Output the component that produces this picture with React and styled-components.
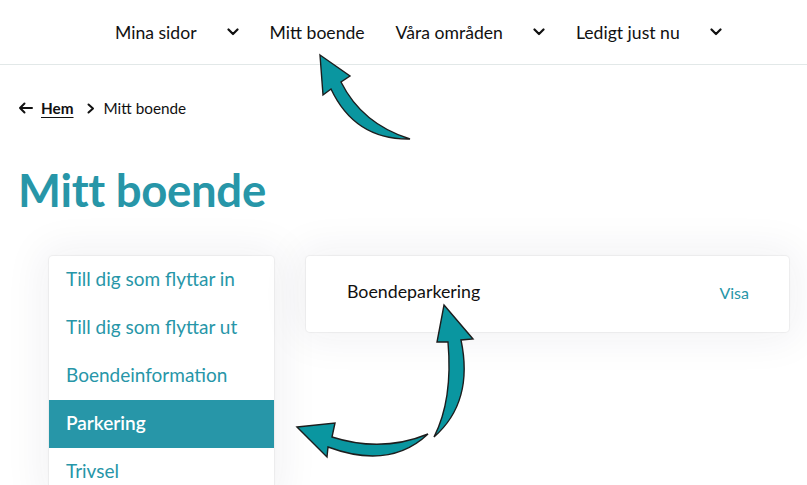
import React from "react";
import styled, { createGlobalStyle } from "styled-components";

const Global = createGlobalStyle`
  html, body { margin: 0; padding: 0; background: #fff; }
  body { font-family: Lato, "Open Sans", sans-serif; color: #111; overflow: hidden; }
  * { box-sizing: border-box; }
`;

const TEAL = "#2796a8";

const Page = styled.div`
  position: relative;
  width: 807px;
  height: 485px;
  overflow: hidden;
`;

const Header = styled.header`
  height: 65px;
  border-bottom: 1px solid #e2e8e8;
  display: flex;
  align-items: center;
  padding-left: 115px;
`;

const Nav = styled.nav`
  display: flex;
  align-items: center;
  gap: 31px;
`;

const NavItem = styled.div`
  display: flex;
  align-items: center;
  gap: 30px;
  font-size: 17.6px;
  color: #111;
`;

const Chevron = styled.svg`
  width: 12px;
  height: 8px;
  display: block;
`;

const Main = styled.main`
  padding: 0 18px;
`;

const Crumbs = styled.div`
  display: flex;
  align-items: center;
  height: 20px;
  margin-top: 33px;
  font-size: 15.3px;
  color: #111;
`;

const CrumbLink = styled.a`
  font-weight: 700;
  color: #111;
  text-decoration: underline;
  text-underline-offset: 3px;
  margin-left: 8px;
`;

const CrumbSep = styled.svg`
  width: 8px;
  height: 11px;
  margin: 0 9px 0 13px;
`;

const Title = styled.h1`
  margin: 45px 0 0;
  font-size: 45.5px;
  line-height: 54px;
  font-weight: 700;
  color: ${TEAL};
  letter-spacing: -0.3px;
`;

const Content = styled.div`
  display: flex;
  align-items: flex-start;
  gap: 32px;
  margin-top: 39px;
  padding-left: 31px;
`;

const Card = styled.div`
  background: #fff;
  border-radius: 4px;
  box-shadow: 0 0 1px 1px rgba(0, 0, 0, 0.05), 0 0 40px 8px rgba(30, 40, 60, 0.06);
`;

const Sidebar = styled(Card)`
  width: 225px;
  display: flex;
  flex-direction: column;
  border-radius: 4px 4px 0 0;
`;

const SideItem = styled.a`
  height: 48px;
  display: flex;
  align-items: center;
  padding: 0 0 4px 17px;
  font-size: 19px;
  color: ${(p) => (p.$active ? "#fff" : TEAL)};
  background: ${(p) => (p.$active ? TEAL : "transparent")};
  font-weight: ${(p) => (p.$active ? 600 : 400)};
`;

const Panel = styled(Card)`
  flex: 1;
  height: 76px;
  display: flex;
  align-items: center;
  justify-content: space-between;
  padding: 0 40px 0 41px;
`;

const PanelTitle = styled.span`
  font-size: 17.8px;
  color: #111;
  margin-top: -6px;
`;

const PanelLink = styled.a`
  font-size: 16px;
  color: ${TEAL};
  margin-top: -4px;
`;

const Overlay = styled.svg`
  position: absolute;
  left: 0;
  top: 0;
  pointer-events: none;
`;

const ChevronDown = () => (
  <Chevron viewBox="0 0 12 8" fill="none">
    <path d="M1.5 1.5 L6 6 L10.5 1.5" stroke="#111" strokeWidth="2.2" strokeLinecap="round" strokeLinejoin="round" />
  </Chevron>
);

export default function App() {
  return (
    <Page>
      <Global />
      <Header>
        <Nav>
          <NavItem>
            Mina sidor
            <ChevronDown />
          </NavItem>
          <NavItem>Mitt boende</NavItem>
          <NavItem>
            Våra områden
            <ChevronDown />
          </NavItem>
          <NavItem>
            Ledigt just nu
            <ChevronDown />
          </NavItem>
        </Nav>
      </Header>
      <Main>
        <Crumbs>
          <svg width="15" height="12" viewBox="0 0 15 12" fill="none">
            <path d="M14 6 H2 M6.5 1.5 L2 6 L6.5 10.5" stroke="#111" strokeWidth="2" strokeLinecap="round" strokeLinejoin="round" />
          </svg>
          <CrumbLink>Hem</CrumbLink>
          <CrumbSep viewBox="0 0 8 11" fill="none">
            <path d="M1.5 1.5 L6 5.5 L1.5 9.5" stroke="#111" strokeWidth="2" strokeLinecap="round" strokeLinejoin="round" />
          </CrumbSep>
          <span>Mitt boende</span>
        </Crumbs>
        <Title>Mitt boende</Title>
        <Content>
          <Sidebar>
            <SideItem>Till dig som flyttar in</SideItem>
            <SideItem>Till dig som flyttar ut</SideItem>
            <SideItem>Boendeinformation</SideItem>
            <SideItem $active>Parkering</SideItem>
            <SideItem>Trivsel</SideItem>
          </Sidebar>
          <Panel>
            <PanelTitle>Boendeparkering</PanelTitle>
            <PanelLink>Visa</PanelLink>
          </Panel>
        </Content>
      </Main>
      <Overlay width="807" height="485" viewBox="0 0 807 485">
        <g fill="#0a96a0" stroke="#1d1d1d" strokeWidth="1.4" strokeLinejoin="miter">
          <path d="M320 55 L350 76 L341 82 Q362 124 410 139 Q355 140 331 89 L323 95 Z" />
          <path d="M444 305 L473 339 L461 340 Q474 402 434 437 Q453 400 448 342 L437 342 Z" />
          <path d="M297 427 L335 423 L332 437 Q382 453 428 434 Q390 470 328 447 L327 457 Z" />
        </g>
      </Overlay>
    </Page>
  );
}
